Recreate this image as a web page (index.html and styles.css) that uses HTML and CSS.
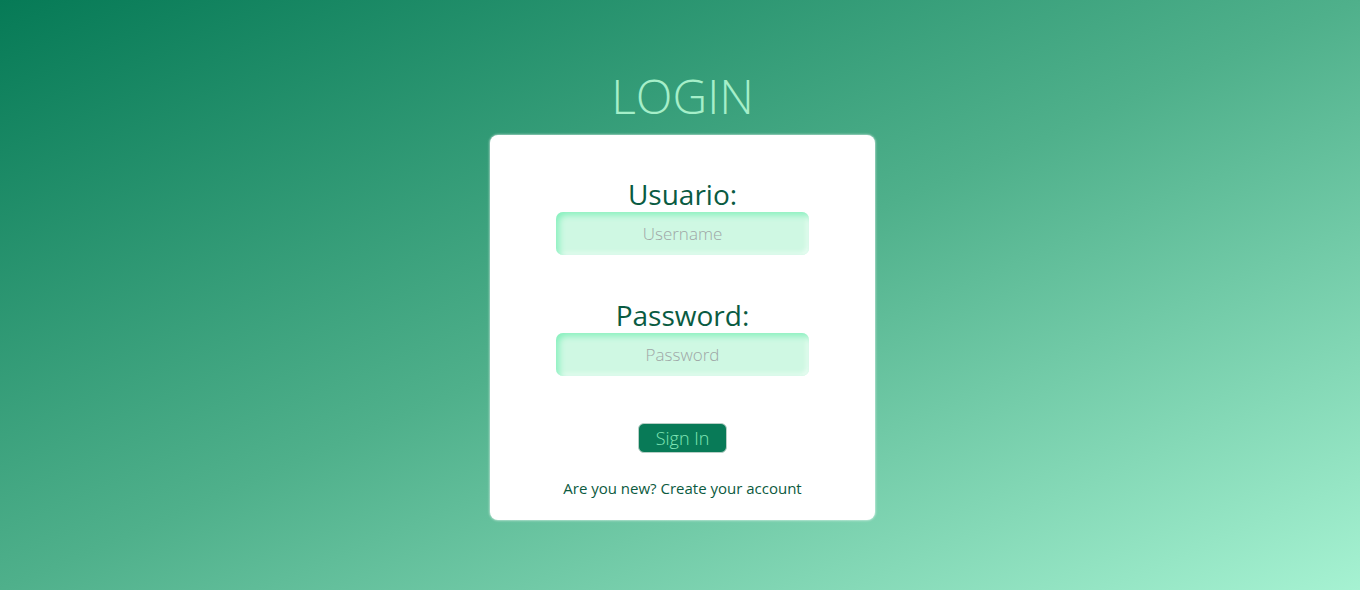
FILE: index.html
```html
<!DOCTYPE html>
<html lang="es">
<head>
<meta charset="utf-8">
<title>Login</title>
<link rel="stylesheet" href="styles.css">
</head>
<body>
<main class="page">
  <h1 class="title">LOGIN</h1>
  <form class="card">
    <label class="label" for="user">Usuario:</label>
    <input class="field" id="user" type="text" placeholder="Username">
    <label class="label label-second" for="pass">Password:</label>
    <input class="field" id="pass" type="password" placeholder="Password">
    <button class="btn" type="button">Sign In</button>
    <a class="link" href="#">Are you new? Create your account</a>
  </form>
</main>
</body>
</html>
```

FILE: styles.css
```css
* { box-sizing: border-box; }
html, body { margin: 0; height: 100%; }
body {
  font-family: "Open Sans", "Noto Sans", sans-serif;
  background: linear-gradient(to bottom right, #067a56 0%, #4fb08b 50%, #a6f2d2 100%);
  min-height: 590px;
}
.page {
  display: flex;
  flex-direction: column;
  align-items: center;
  padding-top: 68px;
  padding-left: 5px;
}
.title {
  margin: 0;
  font-size: 48px;
  line-height: 56px;
  font-weight: 300;
  color: #a5efc9;
  letter-spacing: 0;
}
.card {
  margin-top: 11px;
  width: 385px;
  height: 385px;
  background: #fff;
  border-radius: 8px;
  box-shadow: 0 0 2px 1px rgba(255,255,255,0.45);
  display: flex;
  flex-direction: column;
  align-items: center;
  padding-top: 42px;
}
.label {
  font-size: 28px;
  line-height: 35px;
  font-weight: 400;
  color: #0a5b42;
}
.label-second { margin-top: 43px; }
.field {
  width: 253px;
  height: 43px;
  border: none;
  border-radius: 7px;
  background: #cff8e3;
  box-shadow: inset 3px 3px 6px #86f0bd, inset -2px -2px 4px #f2fdf7;
  text-align: center;
  font-family: "Open Sans", sans-serif;
  font-size: 17px;
  font-weight: 300;
  color: #333;
  outline: none;
}
.field::placeholder { color: #9ea6a6; }
.btn {
  margin-top: 47px;
  width: 89px;
  height: 30px;
  border: 1px solid #b8cfc6;
  border-radius: 6px;
  background: #087a57;
  color: #80e6b6;
  font-family: "Open Sans", sans-serif;
  font-size: 18px;
  font-weight: 300;
  padding: 0;
}
.link {
  margin-top: 25px;
  font-size: 15px;
  line-height: 20px;
  color: #0b5a40;
  text-decoration: none;
}
```
